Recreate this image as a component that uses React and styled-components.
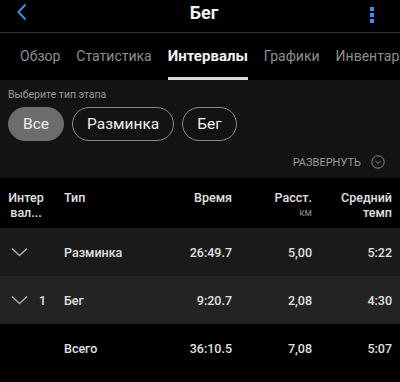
import React from "react";
import styled, { createGlobalStyle } from "styled-components";

const GlobalStyle = createGlobalStyle`
  html, body {
    margin: 0;
    padding: 0;
    background: #000;
  }
  body {
    font-family: Roboto, "Noto Sans", sans-serif;
    color: #e6e6e6;
    overflow: hidden;
  }
`;

const tabs = ["Обзор", "Статистика", "Интервалы", "Графики", "Инвентарь"];
const chips = ["Все", "Разминка", "Бег"];

const rows = [
  { num: "", type: "Разминка", time: "26:49.7", dist: "5,00", pace: "5:22", bg: "#1a1a1a" },
  { num: "1", type: "Бег", time: "9:20.7", dist: "2,08", pace: "4:30", bg: "#232323" },
];

function Chevron() {
  return (
    <svg width="17" height="10" viewBox="0 0 17 10">
      <path d="M1 1.5 L8.5 8.5 L16 1.5" fill="none" stroke="#a8a8a8" strokeWidth="1.6" />
    </svg>
  );
}

class App extends React.Component {
  state = { tab: 2, chip: 0 };

  render() {
    return (
      <Page>
        <GlobalStyle />
        <Header>
          <svg width="12" height="18" viewBox="0 0 12 18">
            <path d="M9.5 1.5 L2.5 9 L9.5 16.5" fill="none" stroke="#3d8eea" strokeWidth="2" />
          </svg>
          <Title>Бег</Title>
          <Kebab>
            <Dot />
            <Dot />
            <Dot />
          </Kebab>
        </Header>

        <TabBar>
          {tabs.map((t, i) => (
            <Tab key={t} active={i === this.state.tab}>
              {t}
            </Tab>
          ))}
        </TabBar>

        <FilterPanel>
          <Label>Выберите тип этапа</Label>
          <ChipRow>
            {chips.map((c, i) => (
              <Chip key={c} selected={i === this.state.chip}>
                {c}
              </Chip>
            ))}
          </ChipRow>
          <Expand>
            РАЗВЕРНУТЬ
            <svg width="14" height="14" viewBox="0 0 14 14">
              <circle cx="7" cy="7" r="6.2" fill="none" stroke="#8a8a8a" strokeWidth="1" />
              <path d="M4.3 5.8 L7 8.5 L9.7 5.8" fill="none" stroke="#8a8a8a" strokeWidth="1" />
            </svg>
          </Expand>
        </FilterPanel>

        <HeadRow>
          <IntCell>
            Интер
            <br />
            вал...
          </IntCell>
          <Cell>Тип</Cell>
          <NumCell>Время</NumCell>
          <NumCell>
            Расст.
            <Unit>км</Unit>
          </NumCell>
          <NumCell>
            Средний
            <br />
            темп
          </NumCell>
        </HeadRow>

        {rows.map((r) => (
          <DataRow key={r.type} bg={r.bg}>
            <ToggleCell>
              <Chevron />
              <IntNum>{r.num}</IntNum>
            </ToggleCell>
            <Cell>{r.type}</Cell>
            <NumCell>{r.time}</NumCell>
            <NumCell>{r.dist}</NumCell>
            <NumCell>{r.pace}</NumCell>
          </DataRow>
        ))}

        <DataRow bg="#000">
          <ToggleCell />
          <Cell>Всего</Cell>
          <NumCell>36:10.5</NumCell>
          <NumCell>7,08</NumCell>
          <NumCell>5:07</NumCell>
        </DataRow>
      </Page>
    );
  }
}

const Page = styled.div`
  width: 400px;
  height: 382px;
  background: #000;
  overflow: hidden;
`;

const Header = styled.div`
  height: 33px;
  border-bottom: 1px solid #303030;
  display: flex;
  align-items: center;
  justify-content: space-between;
  padding: 0 26px 8px 16px;
  box-sizing: border-box;
`;

const Title = styled.div`
  font-size: 18px;
  font-weight: 700;
  color: #f2f2f2;
  margin-left: 10px;
`;

const Kebab = styled.div`
  display: flex;
  flex-direction: column;
  gap: 2px;
  margin-top: 6px;
`;

const Dot = styled.span`
  width: 4px;
  height: 4px;
  background: #3d8eea;
`;

const TabBar = styled.div`
  display: flex;
  gap: 16px;
  padding-left: 20px;
  white-space: nowrap;
  overflow: hidden;
`;

const Tab = styled.div`
  padding: 14px 0 12px;
  line-height: 18px;
  font-size: ${(p) => (p.active ? "15px" : "14px")};
  font-weight: ${(p) => (p.active ? 700 : 400)};
  color: ${(p) => (p.active ? "#f2f2f2" : "#8e8e8e")};
  border-bottom: 3px solid ${(p) => (p.active ? "#dcdcdc" : "transparent")};
`;

const FilterPanel = styled.div`
  background: #131313;
  height: 98px;
  padding: 8px 8px 0;
  box-sizing: border-box;
`;

const Label = styled.div`
  font-size: 10.5px;
  line-height: 13px;
  color: #9a9a9a;
`;

const ChipRow = styled.div`
  display: flex;
  gap: 8px;
  margin-top: 6px;
`;

const Chip = styled.div`
  height: 34px;
  box-sizing: border-box;
  border-radius: 17px;
  padding: 0 14px;
  display: flex;
  align-items: center;
  font-size: 15.5px;
  color: #f0f0f0;
  background: ${(p) => (p.selected ? "#6c6c6c" : "transparent")};
  border: 1px solid ${(p) => (p.selected ? "#6c6c6c" : "#8a8a8a")};
`;

const Expand = styled.div`
  display: flex;
  justify-content: flex-end;
  align-items: center;
  gap: 10px;
  margin-top: 14px;
  padding-right: 7px;
  font-size: 11px;
  color: #9a9a9a;
`;

const Row = styled.div`
  display: grid;
  grid-template-columns: 64px 1fr 80px 80px 80px;
  padding-right: 8px;
  font-size: 12.5px;
  font-weight: 500;
  color: #e0e0e0;
`;

const HeadRow = styled(Row)`
  height: 50px;
  padding-top: 12px;
  box-sizing: border-box;
  line-height: 15px;
`;

const DataRow = styled(Row)`
  height: 48px;
  align-items: center;
  background: ${(p) => p.bg};
`;

const Cell = styled.div``;

const NumCell = styled.div`
  text-align: right;
`;

const IntCell = styled.div`
  text-align: center;
  padding-right: 12px;
`;

const Unit = styled.div`
  font-size: 10px;
  font-weight: 400;
  color: #8a8a8a;
`;

const ToggleCell = styled.div`
  display: flex;
  align-items: center;
  padding-left: 11px;
  gap: 11px;
`;

const IntNum = styled.span`
  font-size: 12.5px;
`;

export default App;
